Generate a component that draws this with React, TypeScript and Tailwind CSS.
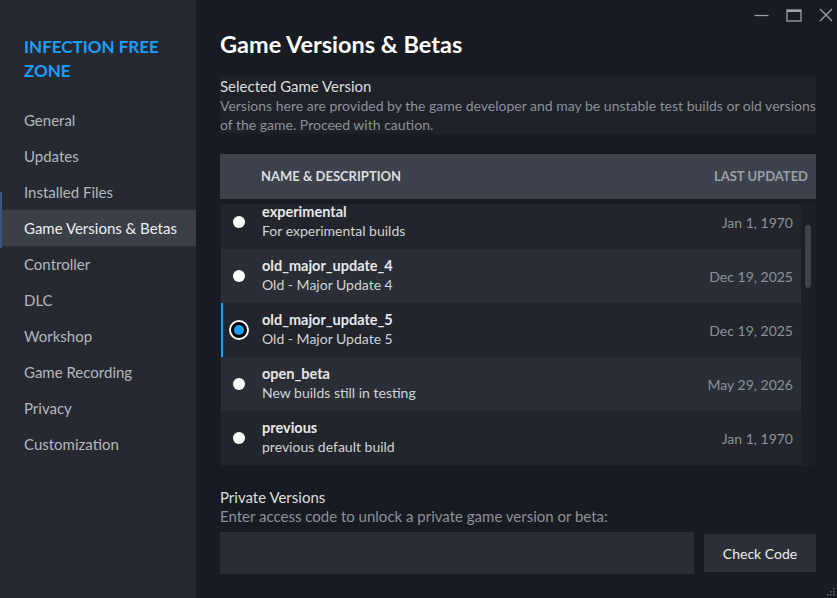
import React from "react";

const rows = [
  { name: "experimental", desc: "For experimental builds", date: "Jan 1, 1970" },
  { name: "old_major_update_4", desc: "Old - Major Update 4", date: "Dec 19, 2025" },
  { name: "old_major_update_5", desc: "Old - Major Update 5", date: "Dec 19, 2025", selected: true },
  { name: "open_beta", desc: "New builds still in testing", date: "May 29, 2026" },
  { name: "previous", desc: "previous default build", date: "Jan 1, 1970" },
];

const nav = [
  "General",
  "Updates",
  "Installed Files",
  "Game Versions & Betas",
  "Controller",
  "DLC",
  "Workshop",
  "Game Recording",
  "Privacy",
  "Customization",
];

export default function App() {
  return (
    <div
      className="relative flex h-[598px] w-[837px] overflow-hidden bg-[#181b22] text-[#dcdedf]"
      style={{ fontFamily: 'Lato, "Noto Sans", Arial, sans-serif' }}
    >
      {/* Sidebar */}
      <aside className="flex w-[196px] shrink-0 flex-col bg-[#262930] pt-[35px]">
        <div className="px-6 text-[17px] font-bold uppercase leading-[24px] text-[#1a9fff]">
          Infection Free Zone
        </div>
        <nav className="mt-[19px] flex flex-col">
          {nav.map((item) => {
            const active = item === "Game Versions & Betas";
            return (
              <div
                key={item}
                className={
                  active
                    ? "relative flex h-[36px] items-center whitespace-nowrap bg-[#3b3f48] pl-6 text-[15px] text-[#eceef0]"
                    : "flex h-[36px] items-center whitespace-nowrap pl-6 text-[15px] text-[#b4b8bd]"
                }
              >
                {active && <span className="absolute left-0 top-[-18px] h-[56px] w-[2px] bg-[#35577d]" />}
                {item}
              </div>
            );
          })}
        </nav>
      </aside>

      {/* Main */}
      <main className="flex flex-1 flex-col pl-6 pr-[21px] pt-[30px]">
        <h1 className="text-[23.5px] font-bold leading-[28px] text-white">Game Versions &amp; Betas</h1>

        <section className="mt-[18px] bg-[#1e2128]">
          <div className="text-[15px] leading-[20px] text-[#dcdedf]">Selected Game Version</div>
          <div className="text-[14px] leading-[19px] text-[#8b929a]">
            Versions here are provided by the game developer and may be unstable test builds or old versions of the
            game. Proceed with caution.
          </div>
        </section>

        {/* Table header */}
        <div className="mt-[20px] flex h-[45px] items-center justify-between bg-[#3d424c] pl-[41px] pr-2 text-[13px] font-bold uppercase">
          <span className="text-[#dcdedf]">Name &amp; Description</span>
          <span className="text-[#9aa0a7]">Last Updated</span>
        </div>

        {/* List */}
        <div className="mt-[5px] flex h-[262px] bg-[#1c1f26]">
          <div className="flex-1 overflow-hidden pl-px">
            <div className="mt-[-9px] flex flex-col">
              {rows.map((r, i) => (
                <div
                  key={r.name}
                  className={
                    "relative flex h-[54px] items-center " +
                    (i % 2 === 0 ? "bg-[#22252c]" : "bg-[#2a2e36]")
                  }
                >
                  {r.selected && <span className="absolute left-0 top-0 h-full w-[2px] bg-[#1a9fff]" />}
                  <div className="flex w-[41px] shrink-0 justify-center pr-[5px]">
                    {r.selected ? (
                      <span className="flex h-[20px] w-[20px] items-center justify-center rounded-full border-[2px] border-white bg-black">
                        <span className="h-[10px] w-[10px] rounded-full bg-[#1a9fff]" />
                      </span>
                    ) : (
                      <span className="h-[12px] w-[12px] rounded-full bg-white" />
                    )}
                  </div>
                  <div className="flex flex-1 flex-col self-start pt-[8px]">
                    <span className="text-[14.5px] font-bold leading-[18px] text-[#e6e8ea]">{r.name}</span>
                    <span className="text-[14px] leading-[19px] text-[#d0d3d6]">{r.desc}</span>
                  </div>
                  <span className="pr-2 text-[14px] text-[#8b929a]">{r.date}</span>
                </div>
              ))}
            </div>
          </div>
          <div className="relative w-[15px] shrink-0">
            <div className="absolute left-[4px] top-[21px] h-[63px] w-[6px] rounded-full bg-[#3e444c]" />
          </div>
        </div>

        {/* Private versions */}
        <div className="mt-[21px] text-[15px] leading-[20px] text-[#dcdedf]">Private Versions</div>
        <div className="text-[15px] leading-[19px] text-[#8b929a]">
          Enter access code to unlock a private game version or beta:
        </div>
        <div className="mt-[6px] flex items-center gap-[10px]">
          <div className="h-[42px] w-[474px] bg-[#2a2d35]" />
          <button className="h-[38px] flex-1 bg-[#2d3038] text-[14px] text-[#eceef0]">Check Code</button>
        </div>
      </main>

      {/* Window controls */}
      <div className="absolute right-[4px] top-[7px] flex items-center gap-[17px] text-[#9ba0a6]">
        <svg width="15" height="16" viewBox="0 0 15 16">
          <line x1="0.5" y1="8.5" x2="14.5" y2="8.5" stroke="currentColor" strokeWidth="1.3" />
        </svg>
        <svg width="16" height="16" viewBox="0 0 16 16">
          <rect x="1" y="3" width="14" height="11" fill="none" stroke="currentColor" strokeWidth="1.3" />
          <line x1="1" y1="4" x2="15" y2="4" stroke="currentColor" strokeWidth="2" />
        </svg>
        <svg width="14" height="16" viewBox="0 0 14 16">
          <path d="M1 2 L13 14 M13 2 L1 14" stroke="currentColor" strokeWidth="1.4" />
        </svg>
      </div>

      {/* Resize grip */}
      <svg className="absolute bottom-[1px] right-[1px]" width="10" height="10" viewBox="0 0 10 10">
        {[
          [8, 2],
          [5, 5],
          [8, 5],
          [2, 8],
          [5, 8],
          [8, 8],
        ].map(([x, y]) => (
          <rect key={`${x}-${y}`} x={x - 1} y={y - 1} width="1.6" height="1.6" fill="#5b6068" />
        ))}
      </svg>
    </div>
  );
}
